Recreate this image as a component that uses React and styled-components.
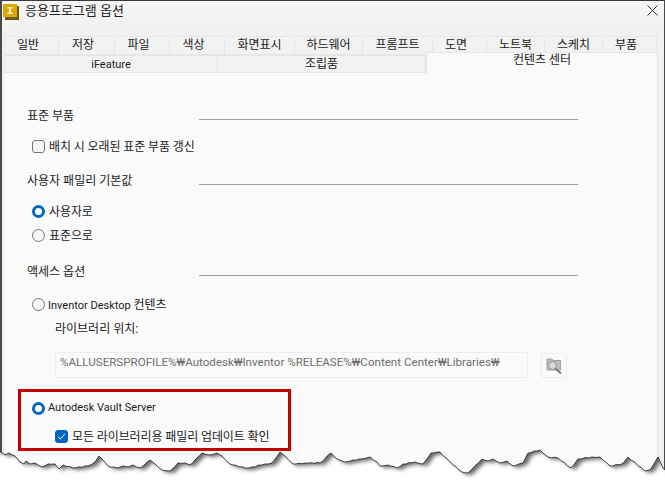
import React from 'react';
import styled, { createGlobalStyle } from 'styled-components';

const GlobalStyle = createGlobalStyle`
  html, body {
    margin: 0;
    background: #fff;
  }
  * {
    box-sizing: border-box;
  }
`;

const Screen = styled.div`
  position: relative;
  width: 665px;
  height: 480px;
  overflow: hidden;
  font-family: Roboto, 'Noto Sans CJK KR', sans-serif;
  font-size: 12px;
  color: #1a1a1a;
`;

const Dialog = styled.div`
  width: 665px;
  height: 480px;
  display: flex;
  flex-direction: column;
  padding: 0 6px 0 1px;
  background: linear-gradient(#f6f6f6, #f1f1f1 30px);
  border-top: 1px solid #3a3a3a;
  border-left: 2px solid #4a4a4a;
  border-right: 1px solid #4a4a4a;
`;

const TitleBar = styled.div`
  height: 35px;
  flex: none;
  display: flex;
  align-items: flex-start;
  gap: 6px;
  padding: 2px 0 0 0;
`;

const TitleText = styled.span`
  font-size: 13px;
  line-height: 14px;
  margin-top: 1px;
  color: #222;
  flex: 1;
`;

const TabRow = styled.div`
  display: flex;
  flex: none;
  height: ${(p) => p.$h}px;
  margin-left: 1px;
`;

const Tab = styled.div`
  width: ${(p) => p.$w}px;
  flex: none;
  display: flex;
  justify-content: center;
  align-items: ${(p) => (p.$active ? 'flex-start' : 'center')};
  padding-right: ${(p) => (p.$short ? 7 : 0)}px;
  background: ${(p) => (p.$active ? '#fafafa' : '#f2f2f2')};
  border: 1px solid #e6e6e6;
  border-left-width: ${(p) => (p.$first || p.$active ? 1 : 0)}px;
  border-bottom-width: ${(p) => (p.$active ? 0 : 1)}px;
  font-size: ${(p) => (p.$latin ? 11 : 12)}px;
  line-height: 15px;
  ${(p) =>
    p.$active &&
    `
    margin-top: -3px;
    height: 21px;
    position: relative;
  `}
`;

const Panel = styled.div`
  flex: 1;
  background: #fafafa;
  border-left: 1px solid #eaeaea;
  border-right: 1px solid #e6e6e6;
  padding: 34px 0 0 23px;
`;

const Heading = styled.div`
  display: flex;
  align-items: flex-end;
  height: 16px;
  margin-top: ${(p) => p.$top || 0}px;
`;

const HeadingText = styled.span`
  width: 172px;
  height: 16px;
  line-height: 18px;
  flex: none;
`;

const HeadingRule = styled.span`
  width: 379px;
  height: 1px;
  background: #a0a0a0;
  margin-bottom: 3px;
`;

const OptionRow = styled.div`
  display: flex;
  align-items: center;
  height: 17px;
  gap: ${(p) => p.$gap || 4}px;
  margin-top: ${(p) => p.$top || 0}px;
  margin-left: ${(p) => p.$left || 0}px;
`;

const OptionText = styled.span`
  margin-top: -2px;
  font-size: ${(p) => (p.$latin ? 11 : 12)}px;
  letter-spacing: ${(p) => (p.$latin ? 0 : -0.1)}px;
  white-space: nowrap;
`;

const Hangul = styled.span`
  font-size: 12px;
`;

const Radio = styled.span`
  width: 13px;
  height: 13px;
  flex: none;
  border-radius: 50%;
  background: ${(p) => (p.$on ? '#fff' : '#f6f6f6')};
  border: ${(p) => (p.$on ? '3.5px solid #0067c0' : '1px solid #757575')};
`;

const CheckBox = styled.span`
  width: 13px;
  height: 13px;
  flex: none;
  border-radius: 3px;
  display: flex;
  align-items: center;
  justify-content: center;
  background: ${(p) => (p.$on ? '#0067c0' : '#f6f6f6')};
  border: 1px solid ${(p) => (p.$on ? '#0067c0' : '#757575')};
`;

const FieldLabel = styled.div`
  height: 16px;
  line-height: 16px;
  margin: 8px 0 0 28px;
`;

const PathRow = styled.div`
  display: flex;
  align-items: flex-start;
  gap: 13px;
  margin: 15px 0 0 28px;
`;

const PathField = styled.div`
  width: 473px;
  height: 26px;
  padding: 1px 0 0 4px;
  border: 1px solid #eeeeee;
  font-size: 11.6px;
  line-height: 16px;
  color: #6f6f6f;
  white-space: nowrap;
`;

const BrowseButton = styled.div`
  width: 26px;
  height: 25px;
  margin-top: 1px;
  display: flex;
  align-items: center;
  justify-content: center;
  border: 1px solid #ececec;
  border-radius: 3px;
`;

const Highlight = styled.div`
  width: 273px;
  height: 62px;
  margin: 11px 0 0 -9px;
  padding: 8px 0 0 11px;
  border: 3px solid #c00000;
`;

const TornEdge = styled.svg`
  position: absolute;
  left: 0;
  top: 0;
`;

// picked off the reference, left to right
const EDGE = [
  [0, 451], [5, 455], [9, 453], [15, 456], [20, 462], [24, 464], [26, 461], [30, 464], [35, 463],
  [42, 467], [48, 464], [55, 464], [59, 469], [63, 465], [73, 468], [88, 466], [95, 462], [99, 456],
  [103, 460], [108, 466], [117, 468], [123, 466], [128, 467], [133, 465], [140, 468], [150, 460],
  [155, 464], [162, 470], [170, 471], [178, 463], [185, 463], [190, 465], [202, 453], [210, 455],
  [217, 453], [222, 456], [230, 464], [245, 468], [252, 467], [265, 464], [272, 463], [280, 452],
  [285, 456], [293, 464], [305, 463], [320, 463], [331, 453], [337, 459], [345, 462], [353, 460],
  [362, 459], [370, 457], [377, 462], [380, 466], [388, 465], [397, 468], [403, 464], [415, 462],
  [423, 464], [431, 453], [440, 452], [450, 462], [462, 472], [468, 473], [482, 459], [488, 461],
  [493, 459], [500, 463], [507, 461], [513, 466], [523, 463], [528, 453], [540, 450], [548, 457],
  [558, 458], [571, 468], [578, 459], [592, 457], [600, 457], [610, 466], [622, 464], [628, 457],
  [645, 471], [650, 470], [658, 457], [663, 468], [665, 470],
];

// rough up the long segments a bit so the line looks torn
const roughen = (pts) => {
  const out = [];
  pts.forEach(([x, y], i) => {
    out.push([x, y]);
    const next = pts[i + 1];
    if (!next) return;
    const steps = Math.floor((next[0] - x) / 3);
    for (let s = 1; s < steps; s++) {
      const t = s / steps;
      const wiggle = (s % 2 ? 0.4 : -0.35) * (1 + Math.sin(x + s) * 0.4);
      out.push([x + (next[0] - x) * t, y + (next[1] - y) * t + wiggle]);
    }
  });
  return out;
};

const edgePoints = roughen(EDGE);
const edgeLine = edgePoints.map((p) => p.map((n) => n.toFixed(1)).join(',')).join(' ');

const AppIcon = () => (
  <svg width="16" height="16" viewBox="0 0 16 16" style={{ flex: 'none', marginTop: 1 }}>
    <rect x="2" y="2" width="14" height="14" fill="#6b5a10" />
    <rect x="0" y="0" width="14" height="13" fill="#dca800" />
    <path d="M4.5 3h5v1.4H8v4.2h1.5V10h-5V8.6H6V4.4H4.5z" fill="#fff4c8" />
  </svg>
);

const CloseIcon = () => (
  <svg width="11" height="11" viewBox="0 0 11 11" style={{ flex: 'none', margin: '2px 0 0 0' }}>
    <path d="M0.5 0.5l10 10M10.5 0.5l-10 10" stroke="#333" strokeWidth="1" fill="none" />
  </svg>
);

const CheckMark = () => (
  <svg width="9" height="9" viewBox="0 0 9 9">
    <path d="M1 4.8l2.3 2.2L8 1.8" stroke="#fff" strokeWidth="1" fill="none" />
  </svg>
);

const FolderSearchIcon = () => (
  <svg width="18" height="18" viewBox="0 0 18 18">
    <path d="M2 2h5l1 1.5h7.5V13H2z" fill="#bdbdbd" stroke="#a0a0a0" />
    <circle cx="7.5" cy="8.5" r="4" fill="#d8d8d8" stroke="#8f8f8f" />
    <path d="M10.5 11.5l5.5 5" stroke="#7c7c7c" strokeWidth="2" fill="none" />
  </svg>
);

const TOP_TABS = [
  ['일반', 55, true], ['저장', 56, true], ['파일', 55, true], ['색상', 55, true], ['화면표시', 70],
  ['하드웨어', 68], ['프롬프트', 70], ['도면', 54, true], ['노트북', 58], ['스케치', 58], ['부품', 54, true],
];

const App = () => (
  <Screen>
    <GlobalStyle />
    <Dialog>
      <TitleBar>
        <AppIcon />
        <TitleText>응용프로그램 옵션</TitleText>
        <CloseIcon />
      </TitleBar>
      <TabRow $h={19}>
        {TOP_TABS.map(([label, w, short], i) => (
          <Tab key={label} $w={w} $short={short} $first={i === 0}>
            {label}
          </Tab>
        ))}
      </TabRow>
      <TabRow $h={18}>
        <Tab $w={214} $first $latin>iFeature</Tab>
        <Tab $w={208}>조립품</Tab>
        <Tab $w={232} $active>컨텐츠 센터</Tab>
      </TabRow>
      <Panel>
        <Heading>
          <HeadingText>표준 부품</HeadingText>
          <HeadingRule />
        </Heading>
        <OptionRow $top={15} $left={5}>
          <CheckBox />
          <OptionText>배치 시 오래된 표준 부품 갱신</OptionText>
        </OptionRow>
        <Heading $top={17}>
          <HeadingText>사용자 패밀리 기본값</HeadingText>
          <HeadingRule />
        </Heading>
        <OptionRow $top={15} $left={5}>
          <Radio $on />
          <OptionText>사용자로</OptionText>
        </OptionRow>
        <OptionRow $top={7} $left={5}>
          <Radio />
          <OptionText>표준으로</OptionText>
        </OptionRow>
        <Heading $top={19}>
          <HeadingText>액세스 옵션</HeadingText>
          <HeadingRule />
        </Heading>
        <OptionRow $top={17} $left={5} $gap={3}>
          <Radio />
          <OptionText $latin>
            Inventor Desktop <Hangul>컨텐츠</Hangul>
          </OptionText>
        </OptionRow>
        <FieldLabel>라이브러리 위치:</FieldLabel>
        <PathRow>
          <PathField>%ALLUSERSPROFILE%₩Autodesk₩Inventor %RELEASE%₩Content Center₩Libraries₩</PathField>
          <BrowseButton>
            <FolderSearchIcon />
          </BrowseButton>
        </PathRow>
        <Highlight>
          <OptionRow $gap={3}>
            <Radio $on />
            <OptionText $latin>Autodesk Vault Server</OptionText>
          </OptionRow>
          <OptionRow $top={11} $left={23}>
            <CheckBox $on>
              <CheckMark />
            </CheckBox>
            <OptionText>모든 라이브러리용 패밀리 업데이트 확인</OptionText>
          </OptionRow>
        </Highlight>
      </Panel>
    </Dialog>
    <TornEdge width="665" height="480" viewBox="0 0 665 480">
      <defs>
        <filter id="tear-blur" x="-5%" y="-50%" width="110%" height="200%">
          <feGaussianBlur stdDeviation="2.2" />
        </filter>
        <clipPath id="below-edge">
          <polygon points={`0,480 ${edgeLine} 665,480`} />
        </clipPath>
      </defs>
      <polygon points={`0,480 ${edgeLine} 665,480`} fill="#fff" />
      <g clipPath="url(#below-edge)">
        <polygon
          points={`-10,400 -10,451 ${edgeLine} 675,470 675,400`}
          fill="#000"
          opacity="0.6"
          filter="url(#tear-blur)"
          transform="translate(4 2)"
        />
      </g>
      <polyline points={edgeLine} fill="none" stroke="#2e2e2e" strokeWidth="0.9" />
    </TornEdge>
  </Screen>
);

export default App;
